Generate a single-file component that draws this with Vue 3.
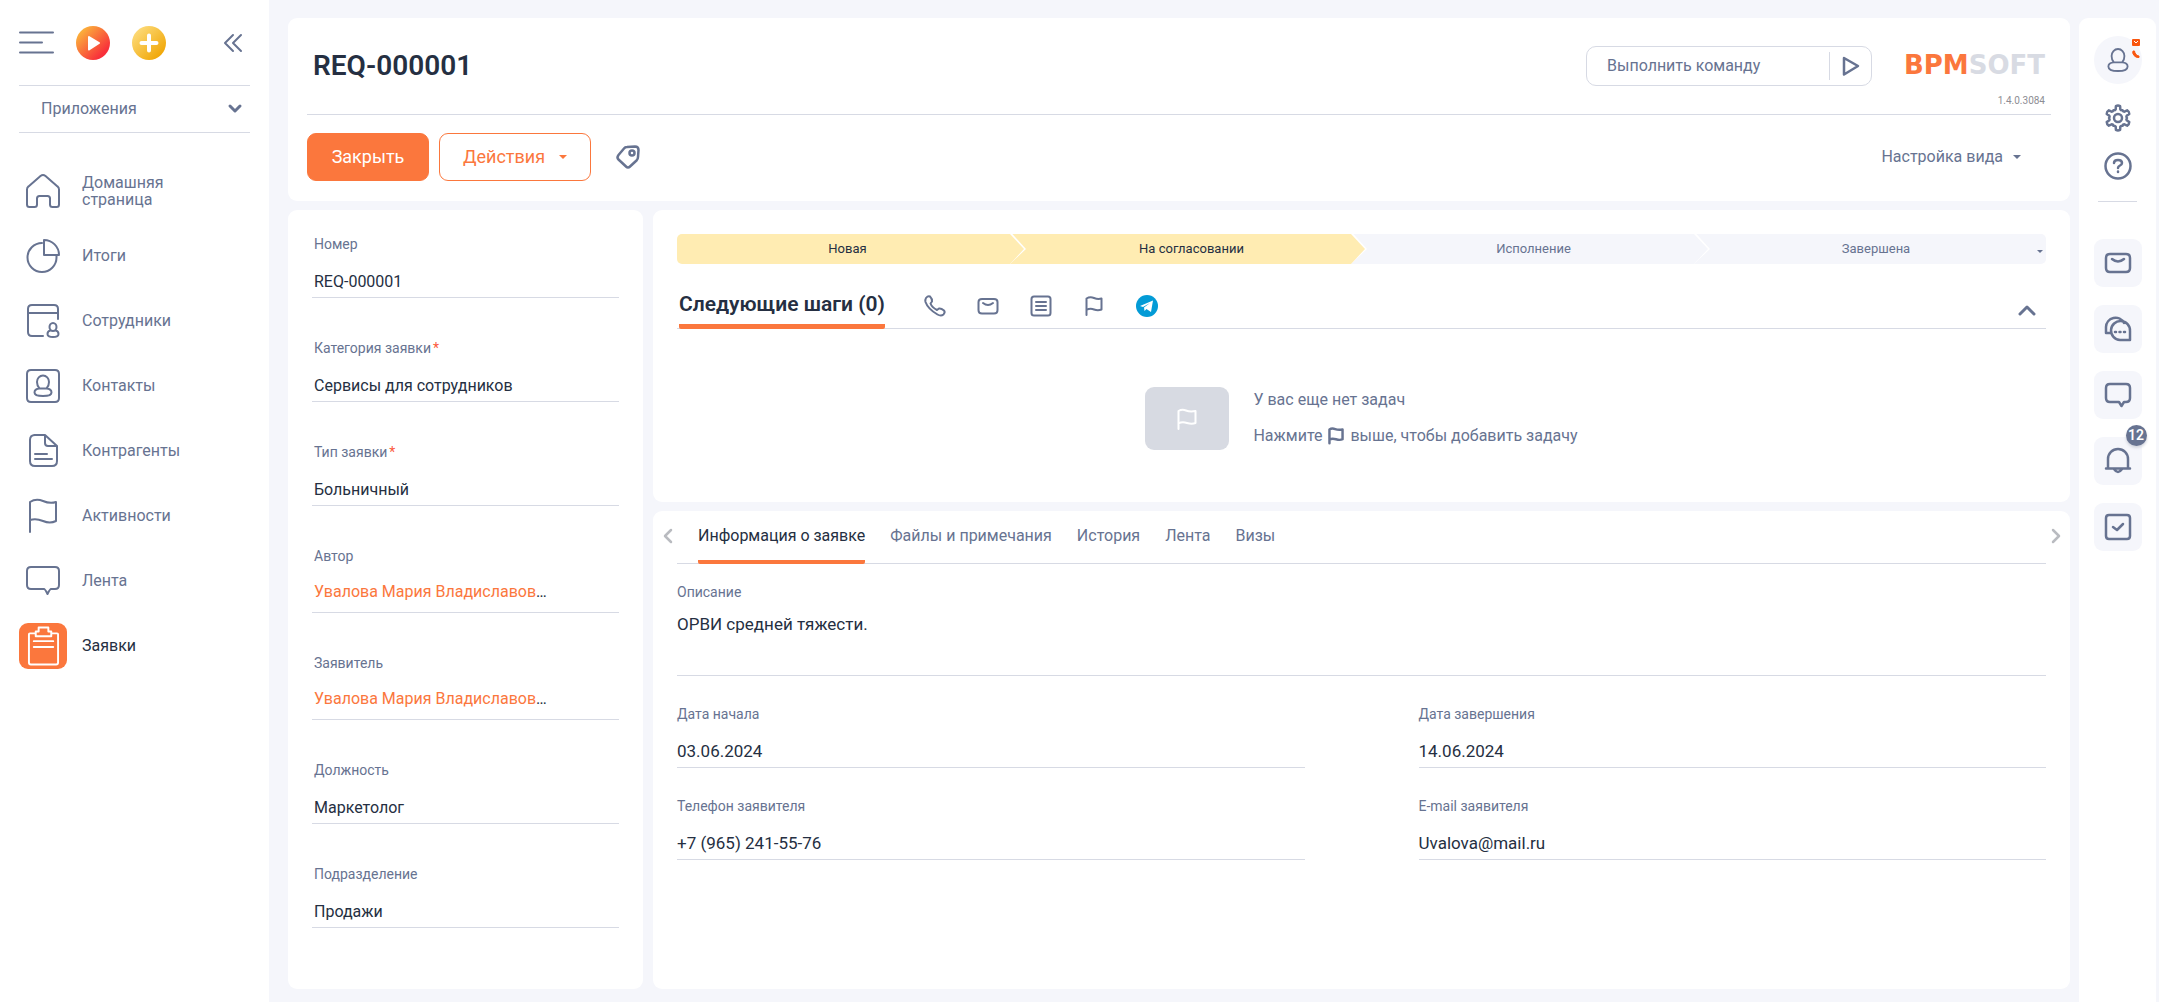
<script setup>
const menu = [
  { icon: 'home', text: 'Домашняя страница' },
  { icon: 'pie', text: 'Итоги' },
  { icon: 'staff', text: 'Сотрудники' },
  { icon: 'contact', text: 'Контакты' },
  { icon: 'doc', text: 'Контрагенты' },
  { icon: 'flag', text: 'Активности' },
  { icon: 'feed', text: 'Лента' },
  { icon: 'clip', text: 'Заявки', active: true }
]

// Stroke icons on a 34-unit canvas.
const paths = {
  home: 'M1 15.5 Q1 13.5 2.500 12.400 L14.500 2 Q17 0 19.500 2 L31.500 12.400 Q33 13.500 33 15.500 V30.500 Q33 33 30.500 33 H26.500 Q24 33 24 30.500 V24.500 Q24 22 21.500 22 H13.500 Q11 22 11 24.500 V30.500 Q11 33 8.500 33 H3.500 Q1 33 1 30.500 Z',
  pie: 'M16 4 A14.500 14.500 0 1 0 30.500 18.500 V16 M18 1 V16 H33 A15 15 0 0 0 18 1 Z',
  staff: 'M17 32 H6 Q2 32 2 28 V5 Q2 1 6 1 H28 Q32 1 32 5 V15 M2 9 H32 M23.500 23 A3.500 4 0 1 1 30.500 23 A3.500 4 0 1 1 23.500 23 M24.500 26.500 Q21.500 27 21.500 30 Q21.500 33 27 33 Q32.500 33 32.500 30 Q32.500 27 29.500 26.500',
  contact: 'M5 1 H29 Q33 1 33 5 V29 Q33 33 29 33 H5 Q1 33 1 29 V5 Q1 1 5 1 Z M11 13 A6 6.500 0 0 1 23 13 Q23 17 20.500 19.500 H13.500 Q11 17 11 13 Z M13.500 19.500 Q8.500 20 8.500 23.500 Q8.500 27 17 27 Q25.500 27 25.500 23.500 Q25.500 20 20.500 19.500',
  doc: 'M8 1 H19 L31 12 V27 Q31 32 26 32 H9 Q4 32 4 27 V6 Q4 1 9 1 M19 1 V9 Q19 12 22 12 H31 M9 20 H21 M9 25 H26',
  flag: 'M4 33 V3 Q10 -1 17 2 T30 3 V22 Q24 25 17 22 T4 21',
  feed: 'M5 3 H29 Q33 3 33 7 V21 Q33 25 29 25 H25 Q24 25 21.500 30 Q19 25 18 25 H5 Q1 25 1 21 V7 Q1 3 5 3 Z',
  clip: 'M9 6 H3 Q2 6 2 7 V36 Q2 38 4 38 H30 Q32 38 32 36 V7 Q32 6 31 6 H25 M9 4 H12 V0 H22 V4 H25 V9 H9 Z M7 14 H27 M7 20 H27'
}

// Six-tooth gear around (14, 14).
function gearPath() {
  const at = (r, deg) => {
    const a = (deg * Math.PI) / 180
    return `${(14 + r * Math.cos(a)).toFixed(2)} ${(14 + r * Math.sin(a)).toFixed(2)}`
  }
  let d = ''
  for (let k = 0; k < 6; k++) {
    const a = -90 + 60 * k
    d += `${k ? 'L' : 'M'}${at(9, a - 15)} L${at(12, a - 10)} Q${at(13, a)} ${at(12, a + 10)} L${at(9, a + 15)} Q${at(8, a + 22)} ${at(9, a + 30)} Q${at(8, a + 38)} ${at(9, a + 45)} `
  }
  return d + 'Z'
}
const gear = gearPath()

const fields = [
  { id: 'number', label: 'Номер', value: 'REQ-000001' },
  { id: 'category', label: 'Категория заявки', value: 'Сервисы для сотрудников', required: true },
  { id: 'type', label: 'Тип заявки', value: 'Больничный', required: true },
  { id: 'author', label: 'Автор', value: 'Увалова Мария Владиславов', link: true },
  { id: 'applicant', label: 'Заявитель', value: 'Увалова Мария Владиславов', link: true },
  { id: 'position', label: 'Должность', value: 'Маркетолог' },
  { id: 'department', label: 'Подразделение', value: 'Продажи' }
]

const stages = [
  { text: 'Новая', done: true },
  { text: 'На согласовании', done: true },
  { text: 'Исполнение' },
  { text: 'Завершена' }
]

const tabs = ['Информация о заявке', 'Файлы и примечания', 'История', 'Лента', 'Визы']

const details = [
  { id: 'start', label: 'Дата начала', value: '03.06.2024' },
  { id: 'end', label: 'Дата завершения', value: '14.06.2024' },
  { id: 'phone', label: 'Телефон заявителя', value: '+7 (965) 241-55-76' },
  { id: 'email', label: 'E-mail заявителя', value: 'Uvalova@mail.ru' }
]

const rail = [
  { name: 'Почта', d: 'M5 4 H21 Q25 4 25 8 V18 Q25 22 21 22 H5 Q1 22 1 18 V8 Q1 4 5 4 Z M7 9 Q13 14 19 9' },
  { name: 'Чаты', d: 'M5 17 H1 V11 A9.500 9.500 0 0 1 19 7 M25 24 H15 A9.500 9.500 0 1 1 25 15 Z M10 16 H11 M14.500 16 H15.500 M19 16 H20' },
  { name: 'Лента', d: 'M5 2 H21 Q25 2 25 6 V16 Q25 20 21 20 H19 L16.500 24 L14 20 H5 Q1 20 1 16 V6 Q1 2 5 2 Z' },
  { name: 'Уведомления', d: 'M3 20.500 V11 A10 10 0 0 1 23 11 V20.500 M1 20.500 H25 M9 21 Q13 27 17 21', count: 12 },
  { name: 'Задачи', d: 'M4 1 H22 Q25 1 25 4 V22 Q25 25 22 25 H4 Q1 25 1 22 V4 Q1 1 4 1 Z M8 13 L12 16 L18 10' }
]
</script>

<template>
  <div class="app">
    <aside class="sidebar">
      <div class="side-top">
        <button class="bare" aria-label="Меню">
          <svg width="35" height="24" viewBox="0 0 35 24" class="line"><path d="M1 1.500H34M1 11.500H23M1 21.500H34" /></svg>
        </button>
        <button class="bare" aria-label="Запустить процесс">
          <svg width="34" height="34" viewBox="0 0 34 34">
            <defs><linearGradient id="gp" x1="0" y1="0" x2="1" y2="1"><stop offset="0.150" stop-color="#fbb03b" /><stop offset="0.800" stop-color="#f8303a" /></linearGradient></defs>
            <circle cx="17" cy="17" r="17" fill="url(#gp)" /><path d="M13 11 L23 17 L13 23.500 Z" fill="#fff" stroke="#fff" stroke-width="2" stroke-linejoin="round" />
          </svg>
        </button>
        <button class="bare" aria-label="Создать">
          <svg width="34" height="34" viewBox="0 0 34 34">
            <defs><linearGradient id="ga" x1="0" y1="0" x2="1" y2="1"><stop offset="0.100" stop-color="#fddc7c" /><stop offset="0.900" stop-color="#f0a400" /></linearGradient></defs>
            <circle cx="17" cy="17" r="17" fill="url(#ga)" /><path d="M17 9.500V24.500M9.500 17H24.500" stroke="#fff" stroke-width="4" stroke-linecap="round" />
          </svg>
        </button>
        <button class="bare collapse" aria-label="Свернуть">
          <svg width="18" height="18" viewBox="0 0 18 18" class="line"><path d="M9 1L1 9L9 17M17 1L9 9L17 17" /></svg>
        </button>
      </div>
      <button class="apps">
        <span>Приложения</span>
        <svg width="14" height="10" viewBox="0 0 14 10" class="line bold"><path d="M2 2L7 7L12 2" /></svg>
      </button>
      <nav class="menu">
        <a v-for="m in menu" :key="m.text" href="#" :class="{ active: m.active }">
          <span class="tile">
            <svg v-if="m.active" width="33" height="40" viewBox="0 -1 34 40" class="line"><path :d="paths[m.icon]" /></svg>
            <svg v-else width="34" height="34" viewBox="0 0 34 34" class="line"><path :d="paths[m.icon]" /></svg>
          </span>
          <span class="menu-text">{{ m.text }}</span>
        </a>
      </nav>
    </aside>

    <main class="main">
      <header class="card header">
        <div class="head-top">
          <h1>REQ-000001</h1>
          <div class="command">
            <input type="text" aria-label="Команда" placeholder="Выполнить команду" />
            <button class="bare run" aria-label="Выполнить">
              <svg width="18" height="20" viewBox="0 0 18 20" class="line medium"><path d="M2 2L16 10L2 18.500Z" /></svg>
            </button>
          </div>
          <div class="brand">
            <div class="logo"><span>BPM</span>SOFT</div>
            <div class="version">1.4.0.3084</div>
          </div>
        </div>
        <div class="actions">
          <button class="btn primary">Закрыть</button>
          <button class="btn outline">Действия <i class="caret"></i></button>
          <button class="bare tag" aria-label="Теги">
            <svg width="24" height="24" viewBox="0 0 24 24" class="line medium"><path d="M11 2 L19 1.500 Q22.500 1.500 22.500 5 L22 12 Q22 14 20.500 15.500 L14 21.500 Q12 23.500 10 21.500 L2.500 14.500 Q0.500 12.500 2.500 10 L8 3.500 Q9 2 11 2 Z" /><circle cx="16" cy="8" r="2.500" /></svg>
          </button>
          <button class="bare view">Настройка вида <i class="caret"></i></button>
        </div>
      </header>

      <div class="columns">
        <section class="card profile">
          <div v-for="f in fields" :key="f.id" class="field">
            <template v-if="f.link">
              <span class="label">{{ f.label }}</span>
              <div class="lookup"><a href="#">{{ f.value }}</a>…</div>
            </template>
            <template v-else>
              <label class="label" :for="f.id">{{ f.label }}<span v-if="f.required" class="star">*</span></label>
              <input :id="f.id" class="value" type="text" :value="f.value" />
            </template>
          </div>
        </section>

        <div class="content">
          <section class="card steps">
            <div class="stages">
              <button v-for="s in stages" :key="s.text" class="stage" :class="{ done: s.done }">{{ s.text }}</button>
              <i class="caret small"></i>
            </div>
            <div class="steps-head">
              <h2>Следующие шаги (0)</h2>
              <div class="tools">
                <button class="bare" aria-label="Звонок"><svg width="22" height="22" viewBox="0 0 22 22" class="line"><path d="M2 3 Q4 0.500 6 1.500 Q8.500 4 8 6.500 L6.500 8.500 Q8 12.500 13 15 L15 13.500 Q17 13 20 15.500 Q21.500 17 19.500 19.500 Q17 21.500 13.500 19.500 Q4 14 1.500 7 Q1 4.500 2 3 Z" /></svg></button>
                <button class="bare" aria-label="Письмо"><svg width="22" height="22" viewBox="0 0 22 22" class="line"><path d="M5 4H17Q20.500 4 20.500 7V15Q20.500 18.500 17 18.500H5Q1.500 18.500 1.500 15V7Q1.500 4 5 4ZM6 8Q11 12 16 8" /></svg></button>
                <button class="bare" aria-label="Список"><svg width="22" height="22" viewBox="0 0 22 22" class="line"><path d="M4 1.500H18Q20.500 1.500 20.500 4V18Q20.500 20.500 18 20.500H4Q1.500 20.500 1.500 18V4Q1.500 1.500 4 1.500ZM6 7H16M6 11H16M6 15H16" /></svg></button>
                <button class="bare" aria-label="Задача"><svg width="22" height="22" viewBox="0 0 22 22" class="line"><path d="M3.500 20V3.500Q7 1.500 11 3T18.500 3.500V14.500Q15 16 11 14.500T3.500 15" /></svg></button>
                <button class="bare" aria-label="Telegram"><svg width="22" height="22" viewBox="0 0 22 22"><circle cx="11" cy="11" r="11" fill="#039bd6" /><path d="M4 11 L17 5.500 L15 17 L10.500 14 L8.500 16 L8 12.500 L14 8 L7 12Z" fill="#fff" /></svg></button>
              </div>
              <button class="bare fold" aria-label="Свернуть"><svg width="18" height="12" viewBox="0 0 18 12" class="line bold"><path d="M2 10L9 3L16 10" /></svg></button>
            </div>
            <div class="empty">
              <div class="empty-pic"><svg width="22" height="22" viewBox="0 0 22 22" class="line"><path d="M2.500 21V3Q6 1 10 2.500T19.500 3V15Q16 16.500 11 15T2.500 15.500" /></svg></div>
              <div class="empty-text">
                <p>У вас еще нет задач</p>
                <p>Нажмите <svg width="18" height="18" viewBox="0 0 22 22" class="line bold"><path d="M3 20V3Q6 1 10 2.500T19 3V15Q16 16.500 11 15T3 15.500" /></svg> выше, чтобы добавить задачу</p>
              </div>
            </div>
          </section>

          <section class="card info">
            <div class="tabbar">
              <button class="bare arrow" aria-label="Назад"><svg width="10" height="16" viewBox="0 0 10 16" class="line medium"><path d="M8 2L2 8L8 14" /></svg></button>
              <div class="tabs" role="tablist">
                <button v-for="(t, i) in tabs" :key="t" role="tab" class="tab" :class="{ current: i === 0 }">{{ t }}</button>
              </div>
              <button class="bare arrow" aria-label="Вперёд"><svg width="10" height="16" viewBox="0 0 10 16" class="line medium"><path d="M2 2L8 8L2 14" /></svg></button>
            </div>
            <div class="describe">
              <label class="label" for="about">Описание</label>
              <textarea id="about" value="ОРВИ средней тяжести."></textarea>
            </div>
            <div class="grid">
              <div v-for="d in details" :key="d.id">
                <label class="label" :for="d.id">{{ d.label }}</label>
                <input :id="d.id" class="value" type="text" :value="d.value" />
              </div>
            </div>
          </section>
        </div>
      </div>
    </main>

    <aside class="rail">
      <button class="bare avatar" aria-label="Профиль">
        <svg width="22" height="26" viewBox="0 0 24 26" class="line"><path d="M5 8.500A7 7.500 0 0 1 19 8.500Q19 13 16.500 15.500H7.500Q5 13 5 8.500ZM7.500 15.500Q1.500 16 1.500 20Q1.500 25 12 25Q22.500 25 22.500 20Q22.500 16 16.500 15.500" /></svg>
        <svg class="marks" width="8" height="20" viewBox="0 0 8 20"><rect width="8" height="7" rx="1" fill="#f9560f" /><path d="M2 2L4 4L6 2" fill="none" stroke="#fff" /><path d="M1 12L2.500 12L3 14L5 16.500L7 17V18.500Q4 19 2 16.500T1 12Z" fill="#f9560f" stroke="#f9560f" /></svg>
      </button>
      <button class="bare" aria-label="Настройки">
        <svg width="28" height="28" viewBox="0 0 28 28" class="line medium"><path :d="gear" /><circle cx="14" cy="14" r="4" /></svg>
      </button>
      <button class="bare" aria-label="Помощь">
        <svg width="28" height="28" viewBox="0 0 28 28" class="line medium"><circle cx="14" cy="14" r="12.500" /><path d="M10 11Q10 8 14 8T18 11Q18 12.500 16 13.500T14 16M14 19.500V20" /></svg>
      </button>
      <hr />
      <button v-for="r in rail" :key="r.name" class="bare rail-tile" :aria-label="r.name">
        <svg width="26" height="26" viewBox="0 0 26 26" class="line medium"><path :d="r.d" /></svg>
        <span v-if="r.count" class="badge">{{ r.count }}</span>
      </button>
    </aside>
  </div>
</template>

<style>
body {
  margin: 0;
  background: #f5f6fb;
}
</style>

<style scoped>
.app {
  display: flex;
  min-height: 100vh;
  box-sizing: border-box;
  background: #f5f6fb;
  color: #677391;
  font-family: Roboto, "Noto Sans", sans-serif;
  font-size: 16px;
  line-height: 22px;
}
.app *,
.app *::before,
.app *::after {
  box-sizing: border-box;
}
button,
input,
textarea {
  font: inherit;
  color: inherit;
  margin: 0;
}
a {
  color: inherit;
  text-decoration: none;
}
svg {
  display: block;
  flex: none;
  overflow: visible;
}
.line {
  fill: none;
  stroke: currentColor;
  stroke-width: 2;
  stroke-linecap: round;
  stroke-linejoin: round;
}
.line.medium {
  stroke-width: 2.5;
}
.line.bold {
  stroke-width: 3;
}
.bare {
  border: 0;
  padding: 0;
  background: none;
}
.caret {
  display: inline-block;
  border: 4px solid transparent;
  border-top-color: currentColor;
  border-bottom: 0;
}
.caret.small {
  border-width: 3px;
  border-bottom: 0;
}
.card {
  background: #fff;
  border-radius: 9px;
}

.sidebar {
  width: 269px;
  flex: none;
  padding: 0 19px;
  background: #fff;
}
.side-top {
  display: flex;
  align-items: center;
  gap: 22px;
  height: 85px;
}
.collapse {
  margin: 0 8px 0 auto;
}
.apps {
  display: flex;
  justify-content: space-between;
  align-items: center;
  width: 100%;
  height: 48px;
  padding: 0 8px 0 22px;
  border: solid #d7dae4;
  border-width: 1px 0;
  background: none;
}
.menu {
  padding-top: 25px;
}
.menu a {
  display: flex;
  align-items: center;
  gap: 15px;
  height: 65px;
  line-height: 17px;
}
.menu-text {
  max-width: 110px;
}
.tile {
  display: flex;
  align-items: center;
  justify-content: center;
  width: 48px;
  height: 46px;
  border-radius: 9px;
}
.active {
  color: #252f42;
}
.active .tile {
  background: #fb773d;
  color: #fff;
}

.main {
  flex: 1;
  min-width: 0;
  display: flex;
  flex-direction: column;
  gap: 9px;
  padding: 18px 9px 13px 19px;
}
.header {
  padding: 0 19px;
}
.head-top {
  display: flex;
  align-items: flex-start;
  height: 97px;
  padding-left: 6px;
  border-bottom: 1px solid #d7dae4;
}
h1 {
  margin: 31px auto 0 0;
  font-size: 28px;
  line-height: 34px;
  font-weight: 600;
  color: #252f42;
}
.command {
  display: flex;
  align-items: center;
  width: 286px;
  height: 40px;
  margin-top: 28px;
  border: 1px solid #d7dae4;
  border-radius: 10px;
}
.command input {
  flex: 1;
  min-width: 0;
  padding: 0 0 0 20px;
  border: 0;
  background: none;
}
.command input::placeholder {
  color: #677391;
  opacity: 1;
}
.run {
  display: flex;
  align-items: center;
  height: 28px;
  padding: 0 11px 0 12px;
  border-left: 1px solid #d7dae4;
}
.brand {
  width: 147px;
  margin: 33px 0 0 32px;
}
.logo {
  font: bold 26px/28px "DejaVu Sans", sans-serif;
  color: #d8dbe3;
}
.logo span {
  color: #fb773d;
}
.version {
  margin-top: 16px;
  padding-right: 6px;
  font-size: 10px;
  line-height: 12px;
  text-align: right;
  color: #8d8d94;
}
.actions {
  display: flex;
  align-items: center;
  padding: 18px 0 20px;
}
.btn {
  height: 48px;
  border: 1px solid #fb773d;
  border-radius: 9px;
  font-size: 18px;
}
.primary {
  width: 122px;
  background: #fb773d;
  color: #fff;
}
.outline {
  display: flex;
  align-items: center;
  justify-content: center;
  gap: 14px;
  width: 152px;
  margin-left: 10px;
  background: #fff;
  color: #fb773d;
}
.tag {
  margin-left: 25px;
}
.view {
  display: flex;
  align-items: center;
  gap: 10px;
  margin: 0 30px 0 auto;
}

.columns {
  flex: 1;
  display: flex;
  gap: 10px;
}
.profile {
  width: 355px;
  flex: none;
  padding: 24px;
}
.field + .field {
  margin-top: 40px;
}
.label {
  display: block;
  font-size: 14px;
  line-height: 20px;
}
.profile .label {
  padding-left: 2px;
}
.star {
  margin-left: 2px;
  line-height: 0;
  color: #fb5a3d;
}
.value {
  display: block;
  width: 100%;
  height: 44px;
  padding: 16px 0 5px;
  border: 0;
  border-bottom: 1px solid #d7dae4;
  border-radius: 0;
  background: none;
  color: #252f42;
}
.profile .value {
  padding-left: 2px;
}
.lookup {
  height: 47px;
  padding: 15px 0 0 2px;
  border-bottom: 1px solid #d7dae4;
  color: #252f42;
}
.lookup a {
  color: #fb773d;
}

.content {
  flex: 1;
  min-width: 0;
  display: flex;
  flex-direction: column;
  gap: 9px;
}
.steps {
  padding: 24px 24px 52px;
}
.stages {
  position: relative;
  display: grid;
  grid-template-columns: 333fr 341fr 343fr 352fr;
  height: 30px;
  border-radius: 5px;
  overflow: hidden;
}
.stage {
  position: relative;
  padding: 0 0 0 22px;
  border: 0;
  background: #f5f6fb;
  font-size: 13px;
}
.stage:first-child {
  padding-left: 8px;
}
.stage:nth-child(4) {
  padding-left: 12px;
}
.stage.done {
  background: #ffecb2;
  color: #252f42;
}
.stage:not(:nth-child(4))::before,
.stage:not(:nth-child(4))::after {
  content: "";
  position: absolute;
  z-index: 1;
  top: 0;
  bottom: 0;
  left: 100%;
  width: 16px;
  background: #fff;
  clip-path: polygon(0 0, 15% 0, 100% 50%, 0 100%);
}
.stage:not(:nth-child(4))::after {
  width: 14px;
  background: inherit;
  clip-path: polygon(0 0, 100% 50%, 0 100%);
}
.stages .caret {
  position: absolute;
  right: 3px;
  top: 16px;
}
.steps-head {
  display: flex;
  align-items: center;
  height: 65px;
  padding: 20px 10px 0 2px;
  border-bottom: 1px solid #d7dae4;
}
h2 {
  margin: 0;
  height: 46px;
  padding-top: 10px;
  border-bottom: 5px solid #fb773d;
  border-radius: 2px;
  font-size: 21px;
  line-height: 22px;
  font-weight: 600;
  color: #252f42;
}
.tools {
  display: flex;
  gap: 31px;
  margin-left: 39px;
}
.fold {
  margin: 8px 0 0 auto;
}
.empty {
  display: flex;
  justify-content: center;
  gap: 24px;
  margin-top: 58px;
}
.empty-pic {
  display: flex;
  align-items: center;
  justify-content: center;
  width: 84px;
  height: 63px;
  border-radius: 9px;
  background: #d7dae2;
  color: #fff;
}
.empty-text p {
  display: flex;
  align-items: center;
  gap: 5px;
  margin: 2px 0 0;
}
.empty-text p + p {
  margin-top: 14px;
}

.info {
  flex: 1;
}
.tabbar {
  display: flex;
  align-items: flex-start;
}
.tabbar .arrow {
  width: 24px;
  height: 50px;
  display: flex;
  align-items: center;
  justify-content: center;
  padding-left: 6px;
  color: #b9bbc0;
}
.tabbar .arrow:last-child {
  padding: 0 4px 0 0;
}
.tabs {
  flex: 1;
  display: flex;
  gap: 25px;
  height: 53px;
  padding-left: 21px;
  border-bottom: 1px solid #d7dae4;
}
.tab {
  height: 53px;
  padding: 0;
  border: 0;
  border-bottom: 4px solid transparent;
  background: none;
}
.tab.current {
  border-color: #fb773d;
  border-radius: 2px;
  color: #252f42;
}
.describe {
  padding: 18px 24px 0;
}
textarea {
  display: block;
  width: 100%;
  height: 74px;
  padding: 11px 0 0;
  border: 0;
  border-bottom: 1px solid #d7dae4;
  background: none;
  resize: none;
  color: #252f42;
}
.info textarea,
.info .value {
  font-size: 17px;
}
.grid {
  display: grid;
  grid-template-columns: 1fr 1fr;
  gap: 28px 114px;
  padding: 28px 24px;
}

.rail {
  width: 77px;
  flex: none;
  display: flex;
  flex-direction: column;
  align-items: center;
  gap: 20px;
  margin: 18px 3px 0 0;
  padding-top: 18px;
  border-radius: 9px 9px 0 0;
  background: #fff;
}
.avatar {
  position: relative;
  display: flex;
  align-items: center;
  justify-content: center;
  width: 48px;
  height: 48px;
  border-radius: 50%;
  background: #f5f6fb;
}
.marks {
  position: absolute;
  right: 2px;
  top: 3px;
}
hr {
  width: 39px;
  margin: 1px 0 17px;
  border: 0;
  border-top: 1px solid #d7dae4;
}
.rail-tile {
  position: relative;
  display: flex;
  align-items: center;
  justify-content: center;
  width: 48px;
  height: 48px;
  border-radius: 9px;
  background: #f5f6fb;
}
.rail-tile + .rail-tile {
  margin-top: -2px;
}
.badge {
  position: absolute;
  right: -5px;
  top: -12px;
  width: 21px;
  height: 21px;
  border-radius: 50%;
  background: #677391;
  color: #fff;
  font-size: 14px;
  line-height: 20px;
  font-weight: 600;
  text-align: center;
  box-shadow: 0 2px 3px #d0d3dc;
}
</style>
